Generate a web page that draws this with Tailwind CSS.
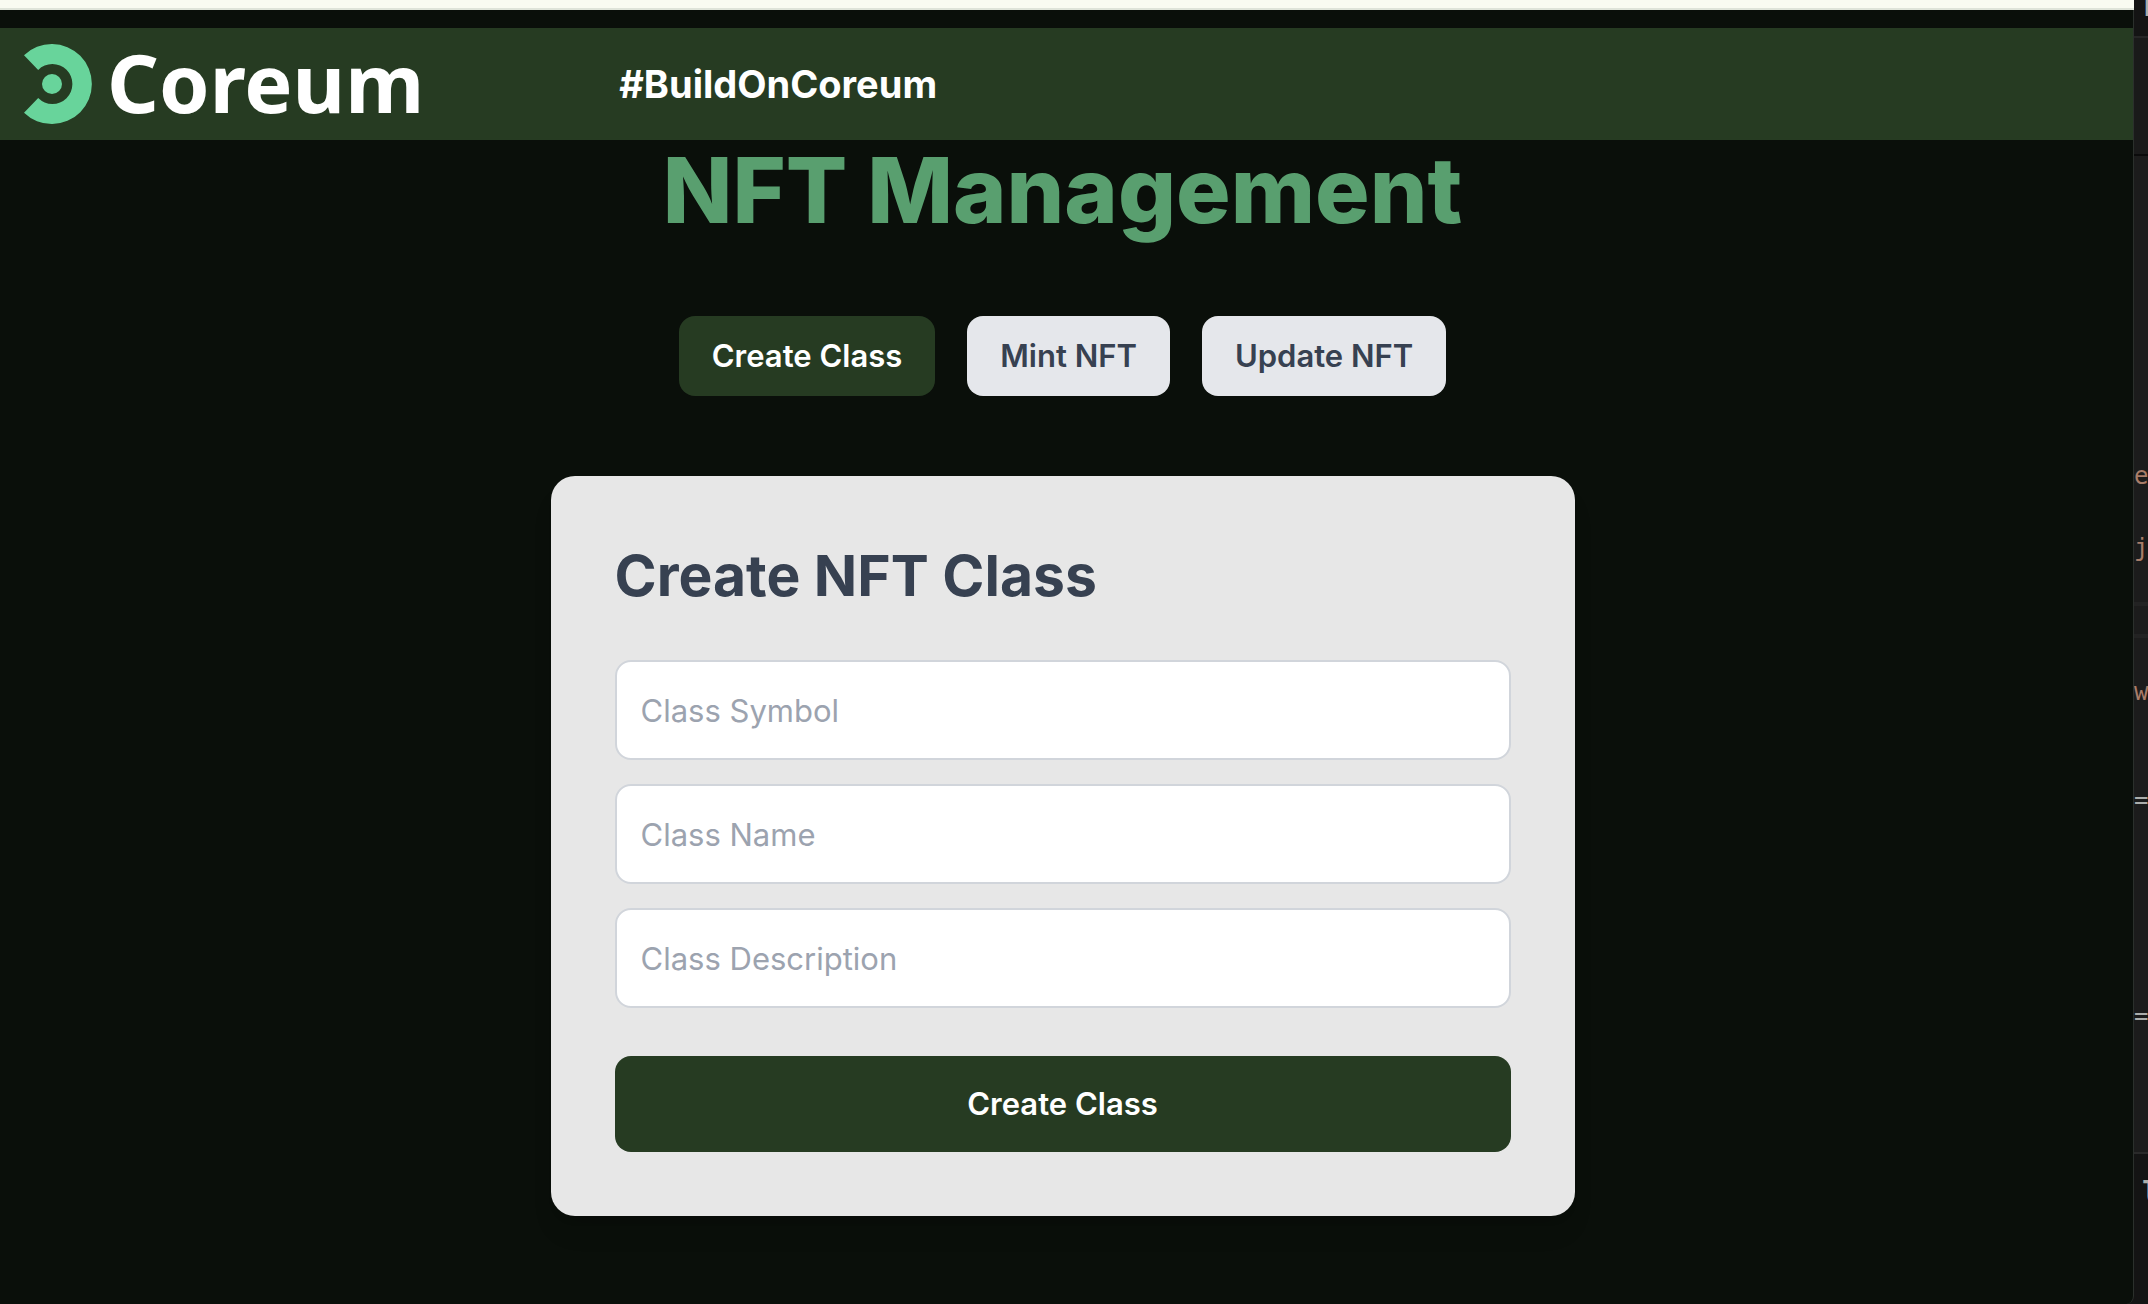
<!DOCTYPE html>
<html lang="en">
<head>
<meta charset="utf-8">
<title>Coreum NFT Management</title>
<script src="https://cdn.jsdelivr.net/npm/@tailwindcss/browser@4"></script>
</head>
<body class="flex min-h-screen bg-[#141414] font-['Inter',sans-serif]">
  <div class="flex min-w-0 grow flex-col">
    <div class="h-[10px] border-b-2 border-[#dfe4d9] bg-[#f9fbf1]"></div>
    <div class="flex grow flex-col overflow-hidden rounded-br-lg border-r border-[#2b302c] bg-[#0a0f0a]">
      <header class="mt-[18px] flex h-28 items-center bg-[#263b22] px-6 text-white">
        <a href="#" class="flex items-center gap-[15px]">
          <svg class="h-20 w-[68px]" viewBox="0 0 68 80" fill="#68d49b" aria-hidden="true">
            <path d="M0 11.3A40 40 0 1 1 0 68.7L14.2 54.1A20 20 0 1 0 14.2 25.9Z"/>
            <circle cx="28" cy="40" r="10"/>
          </svg>
          <span class="pb-1 font-['Noto_Sans',sans-serif] text-[81px] leading-[100px] font-bold">Coreum</span>
        </a>
        <a href="#" class="ml-[195px] text-[38px] leading-12 font-bold">#BuildOnCoreum</a>
      </header>
      <main class="flex flex-col items-center pt-0.5 pr-2 pb-[88px]">
        <h1 class="text-[91px] leading-24 font-extrabold text-[#599f6f]">NFT Management</h1>
        <div class="mt-[78px] flex gap-8 text-[31px] leading-12 font-semibold text-[#374151]">
          <button type="button" class="rounded-2xl bg-[#263b22] px-[33px] py-4 text-white">Create Class</button>
          <button type="button" class="rounded-2xl bg-[#e5e7eb] px-[33px] py-4">Mint NFT</button>
          <button type="button" class="rounded-2xl bg-[#e5e7eb] px-[33px] py-4">Update NFT</button>
        </div>
        <form class="mt-20 flex w-full max-w-5xl flex-col rounded-3xl bg-[#e7e7e7] p-16 shadow-xl">
          <h2 class="mb-12 text-[57px] leading-[72px] font-bold text-[#374151]">Create NFT Class</h2>
          <div class="flex flex-col gap-6 text-[31px] leading-12">
            <input type="text" aria-label="Class Symbol" placeholder="Class Symbol" class="h-[100px] w-full rounded-2xl border-2 border-[#d1d5db] bg-white px-6 placeholder:text-[#9ca3af]">
            <input type="text" aria-label="Class Name" placeholder="Class Name" class="h-[100px] w-full rounded-2xl border-2 border-[#d1d5db] bg-white px-6 placeholder:text-[#9ca3af]">
            <input type="text" aria-label="Class Description" placeholder="Class Description" class="h-[100px] w-full rounded-2xl border-2 border-[#d1d5db] bg-white px-6 placeholder:text-[#9ca3af]">
          </div>
          <button type="submit" class="mt-12 rounded-2xl bg-[#263b22] py-6 text-[31px] leading-12 font-semibold text-white">Create Class</button>
        </form>
      </main>
    </div>
  </div>

  <!-- Edge of the code editor behind the browser window -->
  <aside class="flex w-[14px] shrink-0 flex-col overflow-hidden font-['DejaVu_Sans_Mono',monospace] text-2xl leading-9 text-[#acaeac]">
    <div class="h-[38px] overflow-hidden border-b-2 border-[#262626] pl-[10px] font-['Liberation_Sans',sans-serif] leading-4 font-bold">l</div>
    <div class="h-[118px] border-b-2 border-[#0b0b0b] bg-[#1a1a1a]"></div>
    <div class="flex h-[996px] flex-col bg-[#1c1c1c] pt-[14px]">
      <div class="mt-72 h-9 text-[#a97d69]">e</div>
      <div class="mt-9 h-9 text-[#a97d69]">j</div>
      <div class="mt-9 h-9 border-y-4 border-[#232323]"></div>
      <div class="mt-9 h-9 text-[#a97d69]">w</div>
      <div class="mt-18 h-9">=</div>
      <div class="mt-45 h-9">=</div>
    </div>
    <div class="grow border-t-2 border-[#2a2a2a] pt-5 pl-2 text-[29px] font-bold">l</div>
  </aside>
</body>
</html>
